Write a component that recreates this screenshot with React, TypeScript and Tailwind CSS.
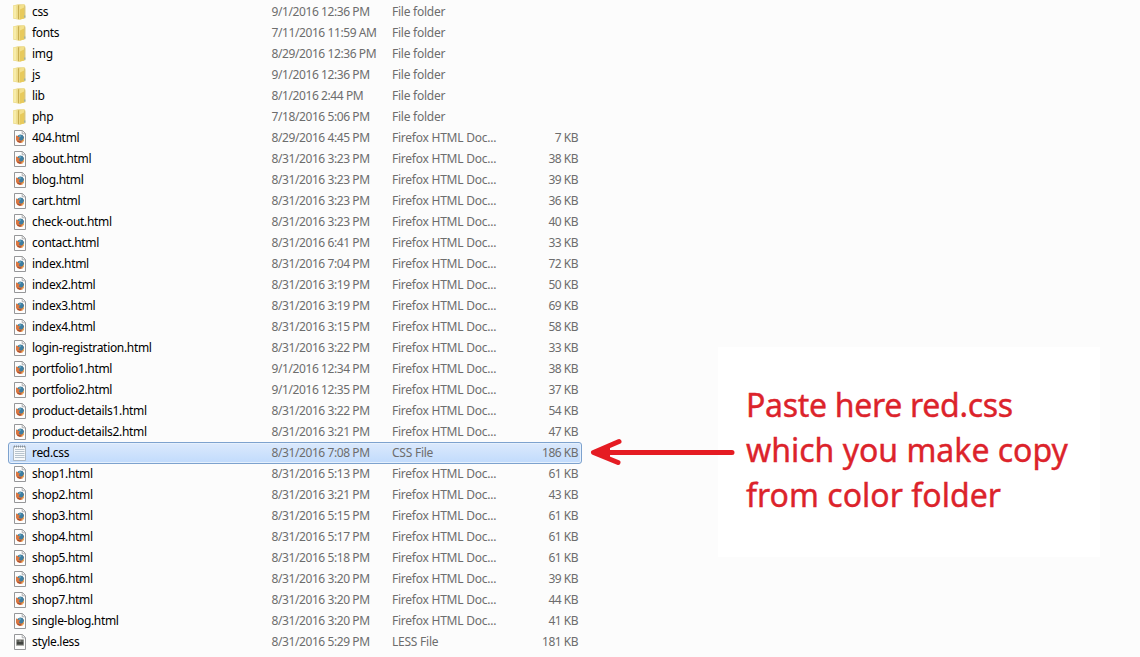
type Kind = "folder" | "html" | "text" | "less";
type Entry = { name: string; date: string; kind: Kind; size?: string };

const dir = (name: string, date: string): Entry => ({ name, date, kind: "folder" });
const html = (name: string, date: string, size: string): Entry => ({ name, date, kind: "html", size });

const entries: Entry[] = [
  dir("css", "9/1/2016 12:36 PM"),
  dir("fonts", "7/11/2016 11:59 AM"),
  dir("img", "8/29/2016 12:36 PM"),
  dir("js", "9/1/2016 12:36 PM"),
  dir("lib", "8/1/2016 2:44 PM"),
  dir("php", "7/18/2016 5:06 PM"),
  html("404.html", "8/29/2016 4:45 PM", "7 KB"),
  html("about.html", "8/31/2016 3:23 PM", "38 KB"),
  html("blog.html", "8/31/2016 3:23 PM", "39 KB"),
  html("cart.html", "8/31/2016 3:23 PM", "36 KB"),
  html("check-out.html", "8/31/2016 3:23 PM", "40 KB"),
  html("contact.html", "8/31/2016 6:41 PM", "33 KB"),
  html("index.html", "8/31/2016 7:04 PM", "72 KB"),
  html("index2.html", "8/31/2016 3:19 PM", "50 KB"),
  html("index3.html", "8/31/2016 3:19 PM", "69 KB"),
  html("index4.html", "8/31/2016 3:15 PM", "58 KB"),
  html("login-registration.html", "8/31/2016 3:22 PM", "33 KB"),
  html("portfolio1.html", "9/1/2016 12:34 PM", "38 KB"),
  html("portfolio2.html", "9/1/2016 12:35 PM", "37 KB"),
  html("product-details1.html", "8/31/2016 3:22 PM", "54 KB"),
  html("product-details2.html", "8/31/2016 3:21 PM", "47 KB"),
  { name: "red.css", date: "8/31/2016 7:08 PM", kind: "text", size: "186 KB" },
  html("shop1.html", "8/31/2016 5:13 PM", "61 KB"),
  html("shop2.html", "8/31/2016 3:21 PM", "43 KB"),
  html("shop3.html", "8/31/2016 5:15 PM", "61 KB"),
  html("shop4.html", "8/31/2016 5:17 PM", "61 KB"),
  html("shop5.html", "8/31/2016 5:18 PM", "61 KB"),
  html("shop6.html", "8/31/2016 3:20 PM", "39 KB"),
  html("shop7.html", "8/31/2016 3:20 PM", "44 KB"),
  html("single-blog.html", "8/31/2016 3:20 PM", "41 KB"),
  { name: "style.less", date: "8/31/2016 5:29 PM", kind: "less", size: "181 KB" },
];

const typeLabels: Record<Kind, string> = {
  folder: "File folder",
  html: "Firefox HTML Doc...",
  text: "CSS File",
  less: "LESS File",
};

function FileIcon({ kind }: { kind: Kind }) {
  if (kind === "folder") {
    return (
      <svg viewBox="0 0 16 16" className="size-4 shrink-0">
        <path d="M1 1.4 6 .3h6.5l.9 1.5v12.4L7 15.8 1 14.6z" fill="#e9d683" />
        <path d="M1.3 1.8 6 .9v14l-4.7-.8z" fill="#f7eca9" />
        <path d="M4.2 1.3 6 .9v14l-1.8-.4z" fill="#eddc8c" />
        <path d="M6 .9 7.3 1.8v13.8L6 15z" fill="#c9ae50" />
        <path d="M7.3 1.8 12 .6v13.8l-4.7 1.2z" fill="#f3e08c" />
        <path d="M8 5.5 12 3.5v10.9l-4 1.2z" fill="#e8ca5c" />
        <path d="M12.1 1.5 13.2 2.5v11.3l-1.1.5z" fill="#d9c57b" />
        <path d="M12.4 11.5h.9v2h-.9z" fill="#78a6bd" />
      </svg>
    );
  }
  if (kind === "text") {
    return (
      <svg viewBox="0 0 16 16" className="size-4 shrink-0">
        <path d="M1.5 1.5h12v14h-12z" fill="#f7f9fb" stroke="#9faab4" strokeWidth=".8" />
        <path d="M2 1.5h11.5" stroke="#828e98" strokeWidth="2" strokeDasharray="1 1" />
        <path d="M3 4.5h9.5M3 6.5h9.5M3 8.5h9.5M3 10.5h9.5M3 12.5h9.5" stroke="#b7c3cd" />
      </svg>
    );
  }
  return (
    <svg viewBox="0 0 16 16" className="size-4 shrink-0">
      <path d="M2.5.5h8l3 3v12h-11z" fill="#fdfdfd" stroke="#969799" />
      <path d="M10.2.7v3.1h3.1" fill="#f0f1f2" stroke="#a4a5a7" strokeWidth=".9" />
      {kind === "html" ? (
        <>
          <path d="M4.2 5.4 5.5 6 8 4.8l2.8.6 1.2 2v3l-1.5 2-2.5.6-2.8-1L4 9.5z" fill="#d9793f" />
          <path d="M5.7 5.7 8 4.6l2.5.5 1.4 1.8v2.2L10 10.4H7.7L6 7.6z" fill="#3d7da2" />
          <path d="M6.2 5.7 8 5l1.5 1L8 7.5z" fill="#67a7bd" />
          <path d="M4.2 5.5 5.6 6.7 7.9 7.3 7.3 8.7 6.4 9l1 1.5 1.8.4 2-.8-1 1.9-2.3.7-2.6-1.1L4 9z" fill="#dc7741" />
          <path d="M5.3 10.2 7 11.5h2.5l-1.4.9-2-.7z" fill="#833c35" />
          <path d="M11.4 7.7 12 10l-1.3 1.9-1.3.3 1.5-1.7z" fill="#f0ba62" />
        </>
      ) : (
        <>
          <path d="M4.3 5.3h7.5v6.4H4.3z" fill="#8b8c87" />
          <path d="M4.8 6h2.4v2H4.8zM8.8 6h2.5v2H8.8z" fill="#62645f" />
          <path d="M4.8 8h6.5v2.6H4.8z" fill="#414440" />
          <path d="M4.3 11h7.5v1H4.3z" fill="#b0b1ad" />
        </>
      )}
    </svg>
  );
}

function FileRow({ entry }: { entry: Entry }) {
  const selected = entry.kind === "text";
  return (
    <li
      className={
        selected
          ? "relative -mb-px flex h-[22px] items-center rounded-[3px] border border-[#7da2ce] bg-linear-to-b from-[#dbe9fc] to-[#c1dbfc] pr-[3px] pl-[3px] shadow-[inset_0_0_0_1px_#e5f0fd]"
          : "flex h-[21px] items-center pr-1 pl-1"
      }
    >
      <FileIcon kind={entry.kind} />
      <span className="ml-1 w-[239.5px] tracking-[-0.32px] text-black">{entry.name}</span>
      <span className="w-[120.5px] tracking-[-0.41px]">{entry.date}</span>
      <span className="w-[120px] tracking-[-0.24px]">{typeLabels[entry.kind]}</span>
      <span className="flex-1 text-right tracking-[-0.5px]">{entry.size}</span>
    </li>
  );
}

export default function App() {
  return (
    <main className="flex h-[657px] w-[1140px] overflow-hidden bg-[#fcfcfc] font-['Noto_Sans','Open_Sans',sans-serif]">
      <ul className="mt-px ml-2 w-[574px] shrink-0 text-[12px] leading-5 whitespace-nowrap text-[#6d6d6d]">
        {entries.map((entry) => (
          <FileRow key={entry.name} entry={entry} />
        ))}
      </ul>
      <aside className="mt-[347px] ml-[136px] h-[210px] w-[382px] bg-white pt-[35px] pl-[28px]">
        <p className="text-[32px] leading-[45px] whitespace-nowrap text-[#dc232b] [-webkit-text-stroke:0.4px_#dc232b]">
          <span className="block tracking-[-0.3px]">Paste here red.css</span>
          <span className="block">which you make copy</span>
          <span className="block tracking-[0.02px]">from color folder</span>
        </p>
      </aside>
      <svg viewBox="0 0 146 30" className="absolute top-[438px] left-[590px] h-[30px] w-[146px]">
        <path d="M142 14.5H6M29 3.5 3.5 14.5 28 24.5" fill="none" stroke="#e51c23" strokeWidth="5" strokeLinecap="round" strokeLinejoin="round" />
        <path d="M3 14.5 20 9v11z" fill="#e51c23" />
      </svg>
    </main>
  );
}
